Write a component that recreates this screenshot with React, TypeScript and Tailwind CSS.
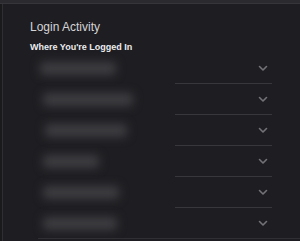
const rows = [
  { w: "w-[76px]", ml: "ml-[2px]" },
  { w: "w-[90px]", ml: "ml-[5px]" },
  { w: "w-[82px]", ml: "ml-[7px]" },
  { w: "w-[56px]", ml: "ml-[5px]" },
  { w: "w-[76px]", ml: "ml-[5px]" },
  { w: "w-[74px]", ml: "ml-[5px]" },
];

const Chevron = () => (
  <svg width="10" height="7" viewBox="0 0 10 7" fill="none">
    <path d="M1.5 1.5 5 5l3.5-3.5" stroke="#727277" strokeWidth="1.6" strokeLinecap="round" strokeLinejoin="round" />
  </svg>
);

export default function App() {
  return (
    <div className="w-[300px] h-[241px] bg-[#1e1e22] flex flex-col overflow-hidden font-['Liberation_Sans',Arial,sans-serif]">
      <div className="h-[4px] bg-[#2b2b2f] border-b border-[#36363a] shrink-0" />
      <div className="flex flex-1">
        <div className="w-[2px] bg-[#1a1a1d]" />
        <div className="w-[1px] bg-[#2f2f33]" />
        <div className="flex-1 flex flex-col pl-[27px]">
          <div className="mt-[15px] text-[12px] leading-[16px] text-[#d4d4d6]">Login Activity</div>
          <div className="mt-[6px] text-[9px] leading-[12px] font-bold text-[#ececee]">Where You're Logged In</div>
          <div className="ml-[8px] flex flex-col">
            {rows.map((r, i) => (
              <div key={i} className={`h-[31px] flex items-center ${i === 5 ? "border-b border-[#303034]" : ""}`}>
                <div className="w-[137px] h-full flex items-center">
                  <div className={`${r.ml} ${r.w} h-[13px] rounded-[4px] bg-[#3e3e42] blur-[5px]`} />
                </div>
                <div className={`w-[97px] h-full flex items-center justify-end pr-[4px] ${i === 5 ? "" : "border-b border-[#38383c]"}`}>
                  <Chevron />
                </div>
              </div>
            ))}
          </div>
        </div>
      </div>
    </div>
  );
}
